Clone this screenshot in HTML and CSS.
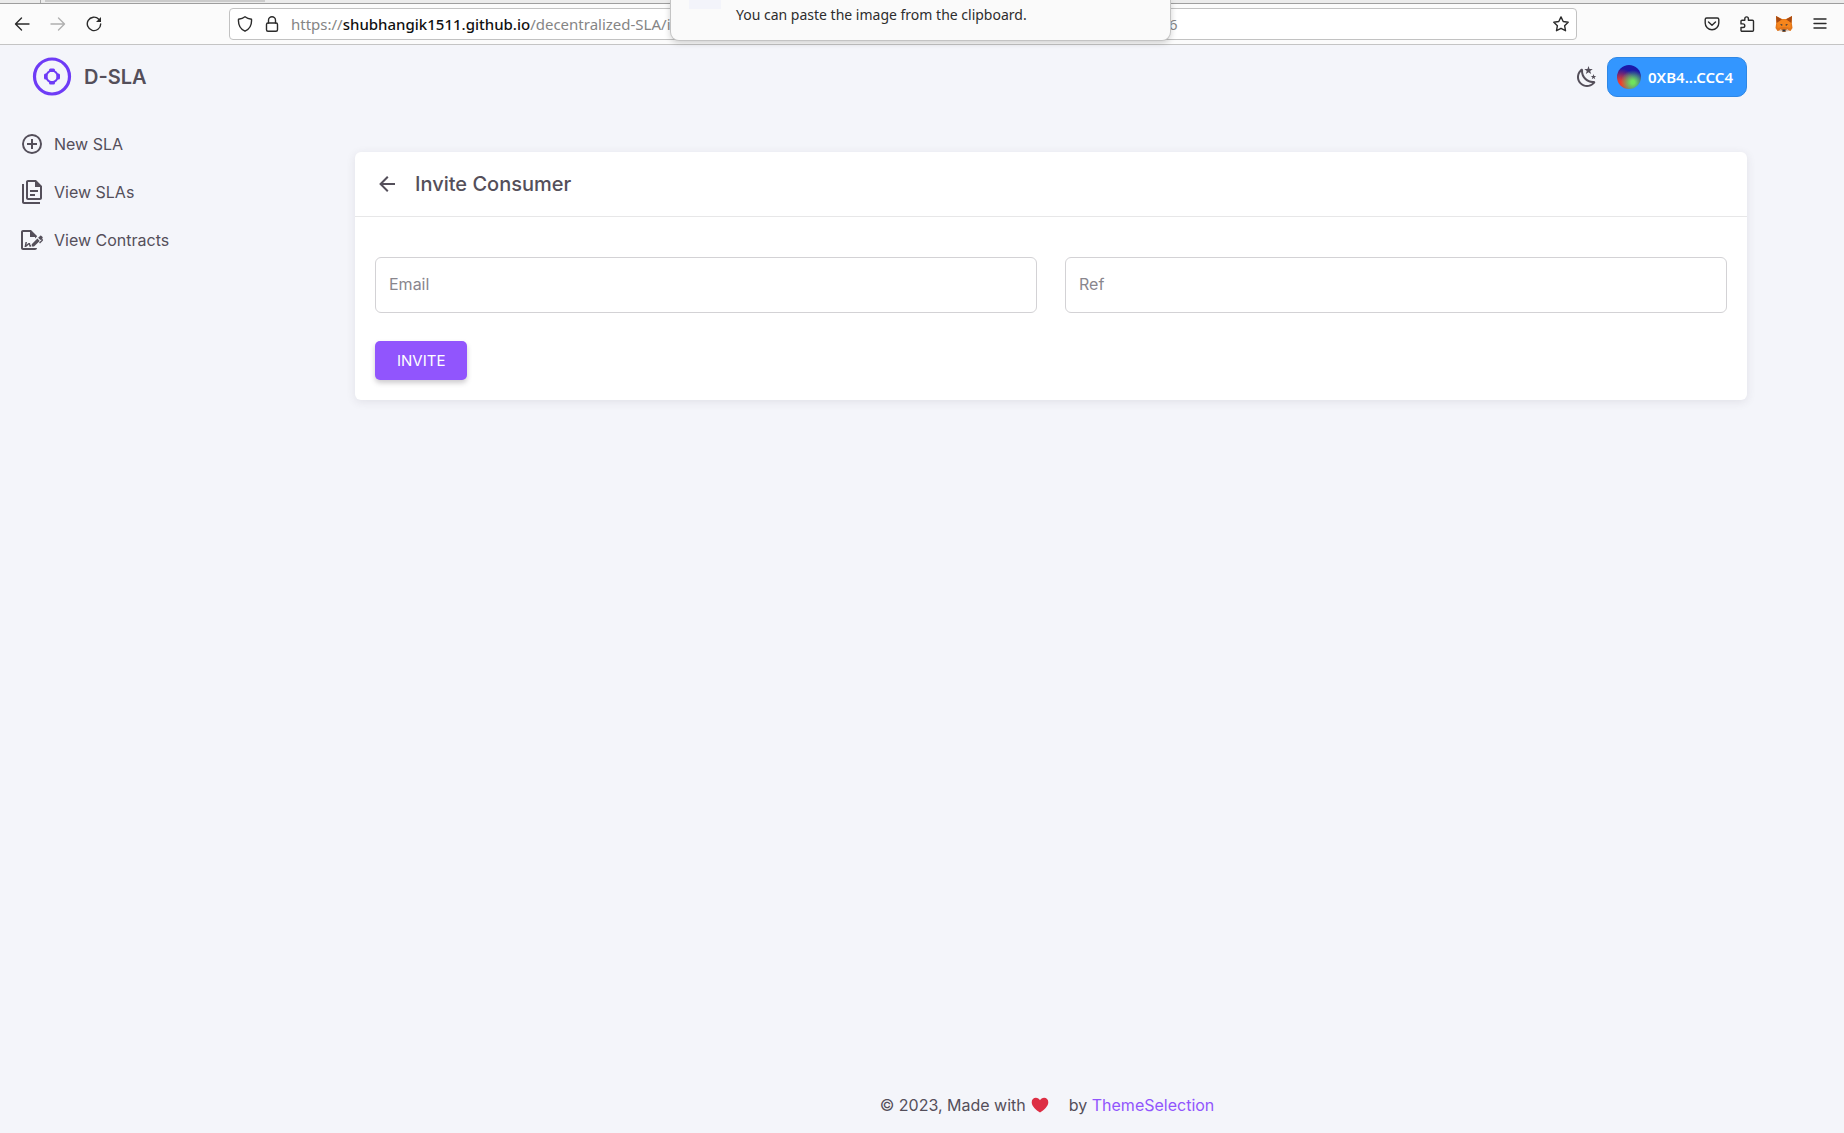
FILE: index.html
```html
<!DOCTYPE html>
<html lang="en">
<head>
<meta charset="utf-8">
<meta name="viewport" content="width=device-width, initial-scale=1">
<title>D-SLA</title>
<link rel="stylesheet" href="styles.css">
</head>
<body>
<div class="browser">
  <div class="tabstrip"><div class="tab-gap"></div><div class="tab"></div></div>
  <div class="toolbar">
    <div class="nav-buttons">
      <button class="tool" aria-label="Back"><svg width="16" height="16" viewBox="0 0 16 16"><path d="M15 8H2M7.500 2 1.500 8l6 6"/></svg></button>
      <button class="tool faded" aria-label="Forward"><svg width="16" height="16" viewBox="0 0 16 16"><path d="M1 8h13M8.500 2l6 6-6 6"/></svg></button>
      <button class="tool" aria-label="Reload"><svg width="16" height="16" viewBox="0 0 16 16"><path d="M12.800 3.200A6.700 6.700 0 1 0 14.700 8"/><path class="solid" d="M15 1v5h-5z"/></svg></button>
    </div>
    <div class="urlbar">
      <svg class="line" width="16" height="16" viewBox="0 0 16 16"><path d="M8 .8C6 2.300 4 2.900 1.500 3.300c-.4 5.200 1.500 9.500 6.500 11.900 5-2.400 6.900-6.700 6.500-11.900C12 2.900 10 2.300 8 .8z"/></svg>
      <svg class="line" width="16" height="16" viewBox="0 0 16 16"><rect x="2.500" y="7" width="11" height="8.300" rx="1.500"/><path d="M4.500 7V4.200a3.500 3.500 0 0 1 7 0V7"/></svg>
      <div class="url"><span class="url-start">https://<b>shubhangik1511.github.io</b>/decentralized-SLA/invi</span><span>6</span></div>
      <button class="tool star" aria-label="Bookmark"><svg width="16" height="16" viewBox="0 0 16 16"><path d="M8 .9l2.200 4.600 5 .7-3.600 3.500.9 5L8 12.300l-4.500 2.400.9-5L.8 6.200l5-.7z"/></svg></button>
    </div>
    <div class="extensions">
      <button class="tool" aria-label="Pocket"><svg width="16" height="16" viewBox="0 0 16 16"><path d="M2.700 2h10.600a1.500 1.500 0 0 1 1.500 1.500V7A6.800 6.800 0 0 1 1.200 7V3.500A1.500 1.500 0 0 1 2.700 2zM4.500 6 8 9.300 11.500 6"/></svg></button>
      <button class="tool" aria-label="Extensions"><svg width="16" height="16" viewBox="0 0 16 16"><path d="M5.800 4.200V2.700a1.800 1.800 0 0 1 3.600 0v1.500h4.100a1 1 0 0 1 1 1v9a1 1 0 0 1-1 1H3a1 1 0 0 1-1-1v-2.700h2a1.800 1.800 0 0 0 0-3.600H2V5.200a1 1 0 0 1 1-1z"/></svg></button>
      <button class="tool fox" aria-label="MetaMask"><svg width="18" height="18" viewBox="0 0 18 18"><path fill="#e2761b" d="M1 1l6 3h4l6-3-.2 7 .7 5-2 3-4-1-1 2H7.500l-1-2-4 1-2-3 .7-5z"/><path fill="#a84a12" d="M1 1l6 3.500-5.300 3.500zM17 1l-6 3.500 5.300 3.500z"/><path fill="#f6851b" d="M2 8l5-3.500h4L16 8l-.5 5-4-1H6.500l-4 1z"/><path fill="#233447" d="M5 9l2.500.5L7 11zM13 9l-2.500.5.5 1.500zM7.500 14.500h3l.3 2H7.200z"/><path fill="#d7c1b3" d="M5.500 14l2 1.500v1L4 16zM12.500 14l-2 1.500v1l3.500-.5z"/></svg></button>
      <button class="tool" aria-label="Menu"><svg width="16" height="16" viewBox="0 0 16 16"><path d="M2 3h12M2 7.500h12M2 12h12"/></svg></button>
    </div>
  </div>
  <div class="notice" role="status"><span class="thumb"></span><span>You can paste the image from the clipboard.</span></div>
</div>
<div class="app">
  <aside class="sidebar">
    <a class="brand" href="#">
      <svg width="40" height="40" viewBox="0 0 40 40" fill="none" stroke="#6e3bf6"><circle cx="20" cy="19.500" r="17.500" stroke-width="3.200"/><circle cx="20" cy="19.500" r="5.700" stroke-width="2"/><g fill="#6e3bf6" stroke="none"><rect x="17" y="11.500" width="6" height="3.500" rx="1.500"/><rect x="17" y="24" width="6" height="3.500" rx="1.500"/><rect x="12" y="16.500" width="3.500" height="6" rx="1.500"/><rect x="24.500" y="16.500" width="3.500" height="6" rx="1.500"/></g></svg>
      <span>D-SLA</span>
    </a>
    <nav class="menu">
      <a href="#"><svg class="icon" viewBox="0 0 24 24"><path d="M12,20C7.590,20 4,16.410 4,12C4,7.590 7.590,4 12,4C16.410,4 20,7.590 20,12C20,16.410 16.410,20 12,20M12,2A10,10 0 0,0 2,12A10,10 0 0,0 12,22A10,10 0 0,0 22,12A10,10 0 0,0 12,2M13,7H11V11H7V13H11V17H13V13H17V11H13V7Z"/></svg>New SLA</a>
      <a href="#"><svg class="icon" viewBox="0 0 24 24"><path d="M16 0H8C6.900 0 6 .9 6 2V18C6 19.100 6.900 20 8 20H20C21.100 20 22 19.100 22 18V6L16 0M20 18H8V2H15V7H20V18M4 4V22H20V24H4C2.900 24 2 23.100 2 22V4H4M10 10V12H18V10H10M10 14V16H15V14H10Z"/></svg>View SLAs</a>
      <a href="#"><svg class="icon" viewBox="0 0 24 24"><path d="M19.700 12.900L14 18.600H11.700V16.300L17.400 10.600L19.700 12.900M23.100 12.100C23.100 12.400 22.800 12.700 22.500 13L20 15.500L19.100 14.600L21.700 12L21.100 11.400L20.400 12.100L18.100 9.800L20.300 7.700C20.500 7.500 20.900 7.500 21.200 7.700L22.600 9.100C22.800 9.300 22.800 9.700 22.600 10C22.400 10.200 22.200 10.400 22.200 10.600C22.200 10.800 22.400 11 22.600 11.200C22.900 11.500 23.200 11.800 23.100 12.100M3 20V4H10V9H15V10.500L17 8.500V8L11 2H3C1.900 2 1 2.900 1 4V20C1 21.100 1.900 22 3 22H15C16.100 22 17 21.100 17 20H3M11 17.100C10.800 17.100 10.600 17.200 10.500 17.200L10 15H8.500L6.400 16.700L7 14H5.500L4.500 19H6L8.900 16.400L9.500 18.700H10.500L11 18.600V17.100Z"/></svg>View Contracts</a>
    </nav>
  </aside>
  <div class="content">
    <header class="topbar">
      <button class="plain" aria-label="Toggle dark mode"><svg class="icon" viewBox="0 0 24 24"><path d="M17.750,4.090L15.220,6.030L16.130,9.090L13.500,7.280L10.870,9.090L11.780,6.030L9.250,4.090L12.440,4L13.500,1L14.560,4L17.750,4.090M21.250,11L19.610,12.250L20.200,14.230L18.500,13.060L16.800,14.230L17.390,12.250L15.750,11L17.810,10.950L18.500,9L19.190,10.950L21.250,11M18.970,15.950C19.800,15.870 20.690,17.050 20.160,17.800C19.840,18.250 19.500,18.670 19.080,19.070C15.170,23 8.840,23 4.940,19.070C1.030,15.170 1.030,8.830 4.940,4.930C5.340,4.530 5.760,4.170 6.210,3.850C6.960,3.320 8.140,4.210 8.060,5.040C7.790,7.900 8.750,10.870 10.950,13.060C13.140,15.260 16.100,16.220 18.970,15.950M17.330,17.970C14.500,17.810 11.700,16.640 9.530,14.500C7.360,12.310 6.200,9.500 6.040,6.680C3.230,9.820 3.340,14.640 6.350,17.660C9.370,20.670 14.190,20.780 17.330,17.970Z"/></svg></button>
      <button class="wallet"><span class="avatar"></span>0XB4...CCC4</button>
    </header>
    <main>
      <form class="card">
        <div class="card-header">
          <button type="button" class="plain" aria-label="Go back"><svg class="icon" viewBox="0 0 24 24"><path d="M20,11V13H8L13.500,18.500L12.080,19.920L4.160,12L12.080,4.080L13.500,5.500L8,11H20Z"/></svg></button>
          <h1>Invite Consumer</h1>
        </div>
        <div class="card-body">
          <div class="fields">
            <div class="field"><input id="email" type="email"><label for="email">Email</label></div>
            <div class="field"><input id="ref" type="text"><label for="ref">Ref</label></div>
          </div>
          <button type="button" class="invite">INVITE</button>
        </div>
      </form>
    </main>
    <footer>
      <span>© 2023, Made with</span>
      <svg class="heart" width="18" height="16" viewBox="0 0 18 16"><path fill="#dd2e44" d="M9 15.500C5 12.800.7 9.300.7 5.200.7 2.600 2.600.8 4.900.8 6.700.8 8.200 1.700 9 3.200 9.800 1.700 11.300.8 13.100.8c2.300 0 4.200 1.800 4.200 4.400 0 4.100-4.300 7.600-8.300 10.300z"/></svg>
      <span>by <a href="#">ThemeSelection</a></span>
    </footer>
  </div>
</div>
</body>
</html>
```

FILE: styles.css
```css
* { box-sizing: border-box; }

body {
  margin: 0;
  min-height: 100vh;
  display: flex;
  flex-direction: column;
  background: #f4f5fa;
  color: #544f5a;
  font: 16px/24px Inter, "Liberation Sans", sans-serif;
}

a { color: inherit; text-decoration: none; }
button { border: 0; padding: 0; background: none; color: inherit; font: inherit; cursor: pointer; }
svg { display: block; flex: none; }
.icon { width: 24px; height: 24px; fill: currentColor; }
.plain { display: flex; }

/* Browser chrome */
.browser { position: relative; font: 15px/20px "Noto Sans", "Open Sans", sans-serif; }
.tabstrip { display: flex; height: 4px; background: #ebebeb; border-bottom: 1px solid #9e9e9e; }
.tab-gap { width: 41px; border-right: 1px solid #aaa; }
.tab { width: 220px; margin-left: 4px; height: 2px; background: #cbcbcb; }
.toolbar {
  display: flex;
  align-items: center;
  height: 41px;
  background: #fbfbfb;
  border-bottom: 1px solid #c4c4c4;
}
.tool { display: flex; color: #2b2b2b; }
.tool svg, .line { fill: none; stroke: currentColor; stroke-width: 1.4; stroke-linejoin: round; stroke-linecap: round; }
.tool .solid { fill: currentColor; stroke: none; }
.fox svg { stroke: none; }
.faded { color: #b0b0b0; }
.nav-buttons { display: flex; gap: 20px; width: 229px; padding-left: 14px; }
.urlbar {
  flex: 1;
  min-width: 0;
  display: flex;
  align-items: center;
  gap: 11px;
  height: 32px;
  padding: 0 7px;
  background: #fff;
  border: 1px solid #c2c2c2;
  border-radius: 4px;
}
.url { flex: 1; min-width: 0; display: flex; overflow: hidden; color: #858585; white-space: nowrap; }
.url-start { flex: none; width: 878px; }
.url b { color: #111; font-weight: 500; }
.line { color: #2b2b2b; }
.extensions { display: flex; align-items: center; justify-content: space-between; width: 267px; padding: 0 16px 0 127px; }
.notice {
  position: absolute;
  top: 0;
  left: 50%;
  width: 501px;
  height: 41px;
  margin-left: -252px;
  display: flex;
  gap: 15px;
  padding: 0 18px;
  background: #fafafa;
  border: 1px solid #c4c4c4;
  border-top: 0;
  border-radius: 0 0 9px 9px;
  box-shadow: 0 2px 6px rgba(0, 0, 0, 0.18);
  color: #2d2d2d;
  font-size: 14px;
  line-height: 30px;
}
.thumb { width: 32px; height: 9px; background: #f3f4fa; }

/* App shell */
.app { flex: 1; display: flex; }
.sidebar { width: 258px; flex: none; }
.brand {
  display: flex;
  align-items: center;
  gap: 12px;
  height: 64px;
  padding-left: 32px;
  font-size: 20px;
  font-weight: 600;
}
.menu { display: flex; flex-direction: column; gap: 4px; margin-top: 13px; }
.menu a { display: flex; align-items: center; gap: 10px; height: 44px; padding-left: 20px; }
.content {
  flex: 1;
  min-width: 0;
  display: flex;
  flex-direction: column;
  max-width: 1440px;
  margin: 0 auto;
  padding: 0 24px;
}
.topbar { display: flex; align-items: center; justify-content: flex-end; gap: 8px; height: 64px; }
.wallet {
  display: flex;
  align-items: center;
  gap: 7px;
  height: 40px;
  padding: 0 13px 0 9px;
  background: #3396ff;
  border: 1px solid #2e87e6;
  border-radius: 10px;
  color: #fff;
  font: 600 15px/20px "Noto Sans", "Open Sans", sans-serif;
}
.avatar {
  width: 24px;
  height: 24px;
  border-radius: 50%;
  background:
    radial-gradient(circle at 66% 72%, #6fe35c 8%, rgba(111, 227, 92, 0) 52%),
    radial-gradient(circle at 14% 78%, #ef3b2c 8%, rgba(239, 59, 44, 0) 55%),
    linear-gradient(#1c18a8 35%, #4a55a0);
}
main { flex: 1; padding-top: 43px; }

/* Invite card */
.card {
  background: #fff;
  border-radius: 6px;
  box-shadow: 0 2px 10px rgba(58, 53, 65, 0.1);
}
.card-header {
  display: flex;
  align-items: center;
  gap: 16px;
  height: 65px;
  padding: 0 20px;
  border-bottom: 1px solid #e7e7e8;
}
h1 { margin: 0; font-size: 20px; font-weight: 500; line-height: 32px; }
.card-body { padding: 40px 20px 20px; }
.fields { display: grid; grid-template-columns: 1fr 1fr; gap: 28px; margin-bottom: 28px; }
.field { position: relative; }
.field input {
  display: block;
  width: 100%;
  height: 56px;
  padding: 0 14px;
  border: 1px solid #d3d2d5;
  border-radius: 6px;
  background: #fff;
  color: #544f5a;
  font: inherit;
}
.field label { position: absolute; top: 15px; left: 14px; color: #89868d; pointer-events: none; }
.field input:focus + label { display: none; }
.invite {
  display: block;
  height: 39px;
  padding: 0 22px;
  border-radius: 5px;
  background: #9155fd;
  box-shadow: 0 3px 5px rgba(58, 53, 65, 0.25);
  color: #fff;
  font-size: 15px;
}

footer { display: flex; align-items: center; justify-content: center; height: 56px; padding-right: 8px; }
footer a { color: #9155fd; }
.heart { margin: 0 20px 0 5px; }
```
